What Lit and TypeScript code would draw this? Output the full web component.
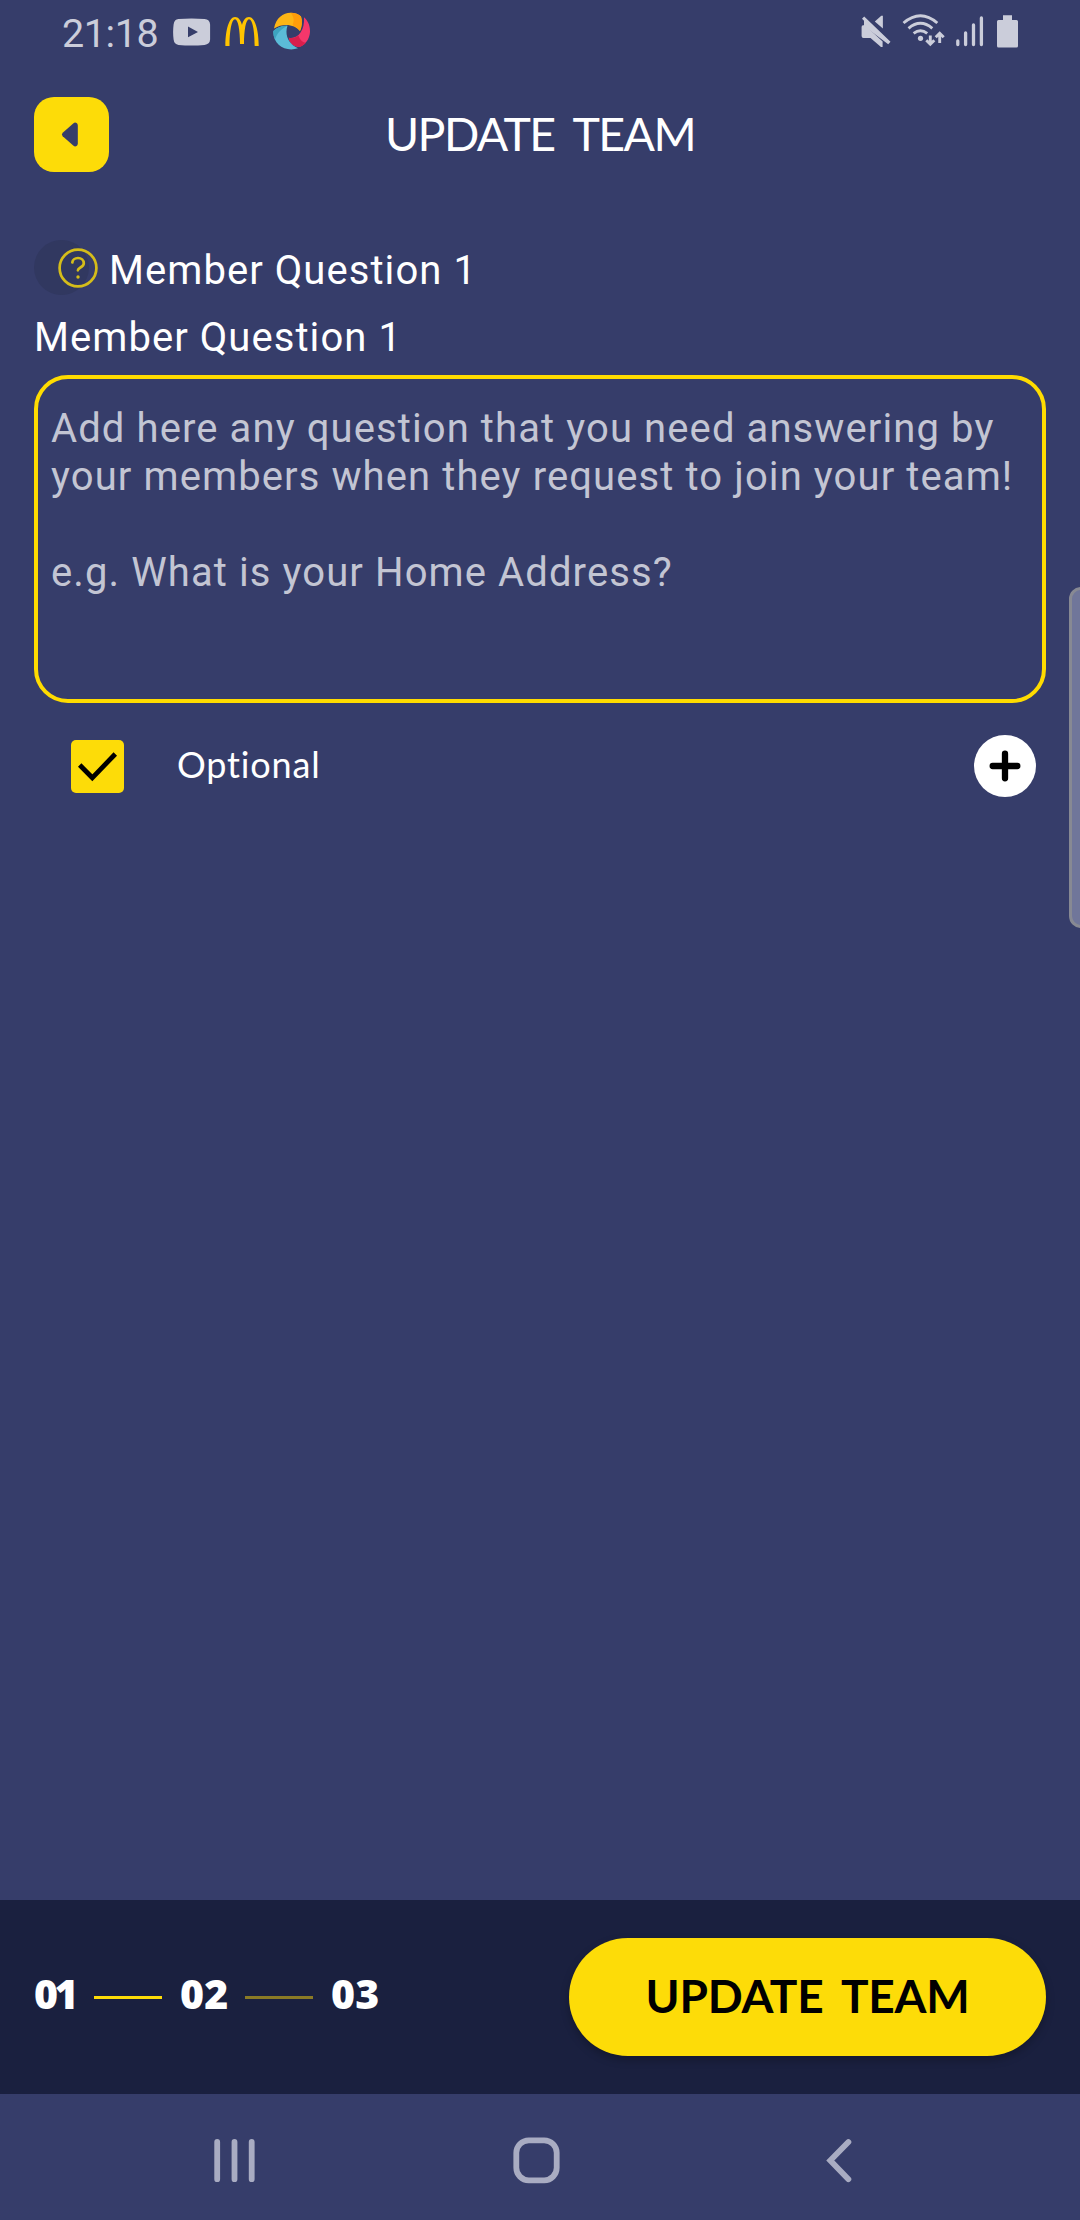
import { LitElement, html, css, svg } from "lit";
import { customElement, property, state } from "lit/decorators.js";
import { classMap } from "lit/directives/class-map.js";

@customElement("status-bar")
class StatusBar extends LitElement {
  static styles = css`
    :host { display: flex; height: 64px; padding: 0 61px 0 62px; justify-content: space-between; color: #cbcdda; }
    .group { display: flex; align-items: flex-start; }
    .time { font: 400 39.5px/68px Roboto, sans-serif; width: 111px; letter-spacing: -0.4px; white-space: nowrap; }
    .icon { display: block; height: 64px; flex: none; }
    .youtube { width: 38px; }
    .arches { width: 34px; margin-left: 14px; }
    .swirl { width: 38px; margin-left: 14px; }
    .mute { width: 31px; }
    .wifi { width: 44px; margin-left: 10px; }
    .signal { width: 28px; margin-left: 10px; }
    .battery { width: 22px; margin-left: 13px; }
  `;
  render() {
    return html`
      <div class="group">
        <div class="time">21:18</div>
        <svg class="icon youtube" viewBox="173 0 38 64">
          <path fill="currentColor" fill-rule="evenodd" d="M178.500 19.100Q191.500 17.700 204.500 19.100Q209.800 19.600 210.100 24.500V39.500Q209.800 44.400 204.500 44.900Q191.500 46 178.500 44.900Q174.200 44.400 173.600 39.500Q172.600 32 173.600 24.500Q174.200 19.600 178.500 19.100ZM188 26.500V37.300L198 32Z"/>
        </svg>
        <svg class="icon arches" viewBox="225 0 34 64">
          <path fill="#ffc400" d="M225.400 46C225.400 30 229 17 235 17C238.500 17 240.800 20.500 242 25C243.200 20.500 245.500 17 249 17C255 17 258.700 30 258.700 46H254.700C254.700 31 252.500 19.300 249 19.300C246 19.300 244 30 244 44H240C240 30 238 19.300 235 19.300C231.600 19.300 229.500 31 229.500 46Z"/>
        </svg>
        <svg class="icon swirl" viewBox="273 0 38 64">
          <path fill="#fdb515" d="M274 28.500C276 18 283 12.800 290.500 12.800C295 12.800 299 14.300 301 16.500C302.500 21 302 26.500 300 31C295 25 284 22.500 274 28.500Z"/>
          <path fill="#ff9d0a" d="M290.500 12.800C295 12.800 299 14.300 301 16.500C302.500 21 302 26.500 300 31C298 28.300 295.500 26.300 292.500 25.200C294.500 21 294 16.500 290.500 12.800Z"/>
          <path fill="#f5376b" d="M304 17.300C308.500 21.500 310.200 26.500 310 32C309.700 39 305 45.500 299 47C293 46.500 289.300 42.500 288.800 37.800C297.500 39.500 305 31 304 17.300Z"/>
          <path fill="#d91f4c" d="M288.800 37.800C292.500 38.600 296 37.500 298.500 35.500C299.500 39.500 303 43 306 42.500C304 45 301.500 46.500 299 47C293 46.500 289.300 42.500 288.800 37.800Z"/>
          <path fill="#5bbcd8" d="M273.400 31C277 27.500 281.500 25.500 287.500 25.700C284.500 34.500 288 44 298 48.300C285.500 52.500 272.500 44.500 273.400 31Z"/>
          <path fill="#3da4c0" d="M273.400 31C277 27.500 281.500 25.500 287.500 25.700C281.500 28.500 277 33 275 39.500C273.600 36.500 273.200 33.500 273.400 31Z"/>
        </svg>
      </div>
      <div class="group">
        <svg class="icon mute" viewBox="861 0 31 64">
          <g fill="currentColor">
            <path d="M862 25.200H865L882.600 41.500V47H881L870.500 37.900H863.500Q861.600 37.900 861.600 36V27Q861.600 25.200 863 25.200Z"/>
            <path d="M874.800 21.500L881.300 15.800H882.900V28.600Z"/>
            <path d="M862 18.800L864.200 16.500L890.500 41.800L888.200 44.200L864 26V20.700Z"/>
          </g>
        </svg>
        <svg class="icon wifi" viewBox="902 0 44 64">
          <g fill="none" stroke="currentColor" stroke-width="2.900">
            <path d="M903.500 23Q920.500 8.500 937.300 23"/>
            <path d="M908.500 28.300Q920.500 18.400 932.300 28.300"/>
            <path d="M913.600 33.400Q920.500 28 927.200 33.400"/>
            <path d="M930.300 35.500V43.500M926.300 40.300L930.300 44.300L934.300 40.300M939.700 43V34.500M935.700 37.300L939.700 33.300L943.700 37.300"/>
          </g>
          <circle cx="920.500" cy="38.300" r="2.600" fill="currentColor"/>
        </svg>
        <svg class="icon signal" viewBox="956 0 28 64">
          <path stroke="currentColor" stroke-width="3.300" stroke-linecap="round" d="M957.800 41V44.500M965.600 33V44.500M973.500 25V44.500M981.400 18V44.500"/>
        </svg>
        <svg class="icon battery" viewBox="997 0 22 64">
          <path fill="currentColor" d="M1003 15.300H1012V20H1016.500Q1018 20 1018 21.500V46Q1018 47.600 1016.500 47.600H998.500Q997 47.600 997 46V21.500Q997 20 998.500 20H1003Z"/>
        </svg>
      </div>
    `;
  }
}

@customElement("step-progress")
class StepProgress extends LitElement {
  @property({ type: Array }) steps: string[] = [];
  @property({ type: Number }) reached = 1;
  static styles = css`
    :host { display: flex; align-items: center; color: #fff; font: 800 41px/60px "Open Sans", sans-serif; }
    .step { width: 48px; padding-bottom: 8px; letter-spacing: 0.300px; white-space: nowrap; }
    .step.first { width: 43px; letter-spacing: -3.500px; }
    .link { width: 68px; height: 3px; background: #fddc08; margin: 1px 18px 0 17px; }
    .link.pending { background: #8a7a25; }
  `;
  render() {
    return this.steps.map((s, i) => html`
      ${i ? html`<div class=${classMap({ link: true, pending: i > this.reached })}></div>` : ""}
      <div class=${classMap({ step: true, first: i === 0 })}>${s}</div>
    `);
  }
}

@customElement("app-root")
class AppRoot extends LitElement {
  @state() private optional = true;

  static styles = css`
    :host { display: block; }
    * { box-sizing: border-box; }
    .screen { position: relative; display: flex; flex-direction: column; width: 1080px; height: 2220px; background: #363d6a; overflow: hidden; }
    svg { display: block; }
    button { border: 0; padding: 0; margin: 0; background: none; }
    .header { display: grid; grid-template-columns: 75px 1fr 75px; align-items: center; padding: 33px 34px 0; height: 108px; }
    .back { width: 75px; height: 75px; border-radius: 20px; background: #fddc08; }
    .title { margin: 0; height: 75px; text-align: center; color: #fff; font: 400 46.500px/72px Lato, sans-serif; letter-spacing: -1.600px; word-spacing: 9px; white-space: nowrap; }
    .form { flex: 1; padding: 68px 34px 0; display: flex; flex-direction: column; }
    .heading { display: flex; height: 55px; color: #fff; font: 400 40px/62px Roboto, sans-serif; letter-spacing: 1.060px; }
    .help { width: 66px; height: 55px; margin-right: 9px; flex: none; }
    .label { color: #fff; font: 400 40px/62px Roboto, sans-serif; letter-spacing: 1.060px; margin-top: 12px; height: 68px; }
    .question { display: block; width: 1012px; height: 328px; margin: 0; border: 4px solid #ffdc00; border-radius: 34px; padding: 26px 13px 20px; background: transparent; resize: none; outline: none; overflow: hidden; font: 400 40px/48px Roboto, sans-serif; letter-spacing: 1.100px; color: #fff; }
    .question::placeholder { color: #c3c5d3; opacity: 1; }
    .options { display: flex; align-items: center; height: 62px; margin-top: 32px; padding: 0 10px 0 37px; }
    .check { width: 53px; height: 53px; border-radius: 5px; background: #fddc08; }
    .option-label { flex: 1; height: 62px; margin-left: 53px; color: #fff; font: 400 36px/59px Lato, sans-serif; letter-spacing: 0.850px; }
    .footer { display: flex; align-items: center; justify-content: space-between; height: 194px; padding: 0 34px; background: #1a203f; }
    .submit { width: 477px; height: 118px; padding-bottom: 3px; border-radius: 59px; background: #fddc08; color: #000; font: 700 46px/115px Lato, sans-serif; letter-spacing: -0.250px; word-spacing: 8px; box-shadow: 0 4px 9px rgba(0, 0, 0, 0.25); white-space: nowrap; }
    .nav { height: 126px; }
    .edge-handle { position: absolute; left: 1069px; top: 587px; width: 24px; height: 341px; border: 3px solid #878993; border-radius: 13px; background: #70769a; }
  `;

  render() {
    return html`
      <div class="screen">
        <status-bar></status-bar>
        <header class="header">
          <button class="back" aria-label="Back">
            <svg width="75" height="75" viewBox="0 0 75 75">
              <path fill="#363d6a" d="M28.700 35.700L39.500 26.200Q41 25 42.600 26Q43.800 26.800 43.800 28.500V46.500Q43.800 48.200 42.600 49Q41 50 39.500 48.800L28.700 39.300Q27 37.500 28.700 35.700Z"/>
            </svg>
          </button>
          <h1 class="title">UPDATE TEAM</h1>
        </header>
        <main class="form">
          <div class="heading">
            <svg class="help" viewBox="0 0 66 55">
              <circle cx="27.500" cy="27.500" r="27.500" fill="#313860"/>
              <g fill="none" stroke="#d5bd1a" stroke-width="2.700" stroke-linecap="round" stroke-linejoin="round">
                <circle cx="44" cy="28" r="18.400"/>
                <path d="M38.300 22.500C38.600 19.800 41 18 44 18C47.300 18 49.800 20.300 49.800 23.300C49.800 27.700 43.900 27.200 43.900 30.300"/>
              </g>
              <circle cx="44" cy="37" r="1.700" fill="#d5bd1a"/>
            </svg>
            <span>Member Question 1</span>
          </div>
          <div class="label">Member Question 1</div>
          <textarea class="question" .placeholder=${"Add here any question that you need answering by\nyour members when they request to join your team!\n\ne.g. What is your Home Address?"}></textarea>
          <div class="options">
            <button class="check" role="checkbox" aria-checked=${this.optional} aria-label="Optional" @click=${() => (this.optional = !this.optional)}>
              <svg width="53" height="53" viewBox="0 0 53 53">
                ${this.optional ? svg`<path d="M8.700 25L21.300 37.800L44.300 14" fill="none" stroke="#000" stroke-width="4.800"/>` : ""}
              </svg>
            </button>
            <div class="option-label">Optional</div>
            <button aria-label="Add question">
              <svg width="62" height="62" viewBox="0 0 62 62">
                <circle cx="31" cy="31" r="31" fill="#fff"/>
                <path d="M31 18.700V43.300M18.700 31H43.300" stroke="#000" stroke-width="6.300" stroke-linecap="round"/>
              </svg>
            </button>
          </div>
        </main>
        <footer class="footer">
          <step-progress .steps=${["01", "02", "03"]} .reached=${1}></step-progress>
          <button class="submit">UPDATE TEAM</button>
        </footer>
        <nav class="nav">
          <svg width="1080" height="126" viewBox="0 2094 1080 126" fill="none" stroke="#a9acc2" stroke-width="5.800">
            <path stroke-linecap="round" d="M217.200 2142V2179.200M234.500 2142V2179.200M251.700 2142V2179.200"/>
            <rect x="516.300" y="2140.300" width="40.400" height="40" rx="12.500"/>
            <path stroke-linecap="round" d="M848.400 2142L830.300 2160.500L848.400 2179.200"/>
          </svg>
        </nav>
        <div class="edge-handle"></div>
      </div>
    `;
  }
}
